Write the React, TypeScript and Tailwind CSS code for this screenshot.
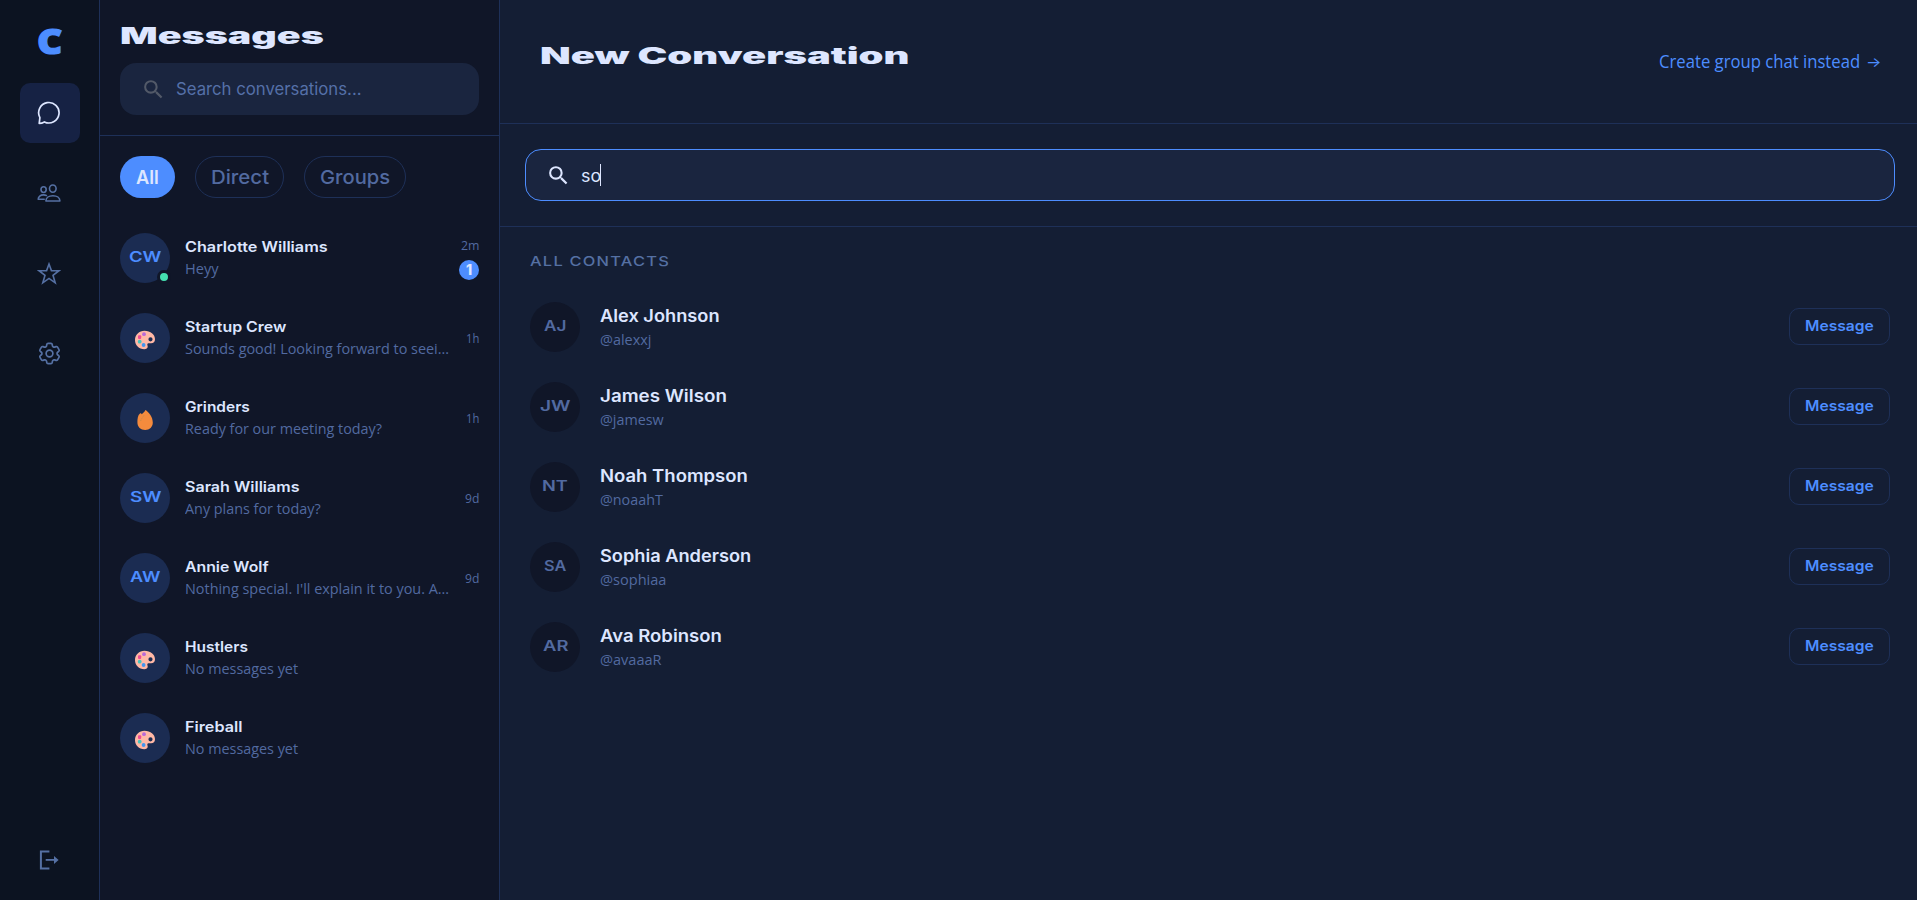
import { useLayoutEffect, useRef, useState } from "react";
import type { ReactNode } from "react";
import { MdSearch } from "react-icons/md";
import { HiOutlineCog6Tooth } from "react-icons/hi2";

/* A run of text stretched horizontally to fill a given width. */
function Wide({ w, children, className = "" }: { w: number; children: ReactNode; className?: string }) {
  const ref = useRef<HTMLSpanElement>(null);
  const [scale, setScale] = useState(1);
  useLayoutEffect(() => {
    if (ref.current) setScale(w / ref.current.offsetWidth);
  }, [w]);
  return (
    <span className={`block text-left whitespace-nowrap ${className}`} style={{ width: w }}>
      <span ref={ref} className="inline-block origin-left" style={{ transform: `scaleX(${scale})` }}>
        {children}
      </span>
    </span>
  );
}

const ChatIcon = () => (
  <svg viewBox="0 0 24 24" className="mr-px size-6" fill="none" stroke="currentColor" strokeWidth="1.7" strokeLinejoin="round">
    <path d="M2.200 22.300 2.900 16.600A10.200 10.200 0 1 1 7.400 20.900Q4.800 22.300 2.200 22.300Z" />
  </svg>
);

const PeopleIcon = () => (
  <svg viewBox="0 0 24 24" className="mr-px size-6" fill="none" stroke="currentColor" strokeWidth="1.6" strokeLinejoin="round" strokeLinecap="round">
    <ellipse cx="15.8" cy="7.6" rx="3.3" ry="3.6" />
    <ellipse cx="6.6" cy="8.6" rx="2.6" ry="2.9" />
    <path d="M8.9 20c0-3.2 3-5.2 7-5.2s7 2 7 5.2Z" />
    <path d="M7.2 18.3H1.2c0-2.7 2.3-4.4 5.4-4.4 1.1 0 2 .2 2.8.5" />
  </svg>
);

const StarIcon = () => (
  <svg viewBox="0 0 24 24" className="mr-px size-6" fill="none" stroke="currentColor" strokeWidth="1.6">
    <path d="M12 3 14.400 9.600 22 9.700 16 14.300 18.200 21.800 12 17.400 5.800 21.800 8 14.300 2 9.700 9.600 9.600Z" />
  </svg>
);

const LogoutIcon = () => (
  <svg viewBox="0 0 20 20" className="mr-px size-5" fill="none" stroke="currentColor" strokeWidth="2">
    <path d="M10.400 1.400H1.900V18.600H10.400" />
    <path d="M6.700 9.900H16.500" strokeWidth="1.800" />
    <path d="M15 5.900 19.600 9.900 15 14Z" fill="currentColor" stroke="none" />
  </svg>
);

const Palette = () => (
  <svg viewBox="0 0 20 20" className="mt-[3px] size-5">
    <path fill="#ffb8a6" fillRule="evenodd" d="M9.5.8C4.200.8 0 4.800 0 10c0 5.200 4 9.200 9.300 9.200 2 0 3.400-.9 3.400-2.500 0-1-.4-1.500-.4-2.200 0-.8.7-1.200 1.800-1.200h2C18.500 13.300 20 11.600 20 9.200 20 4.500 15.500.8 9.500.8Zm6 6.400a2.100 2.100 0 1 1 0 4.200 2.100 2.100 0 0 1 0-4.200Z" />
    <circle cx="9" cy="4.200" r="1.900" fill="#b969d8" />
    <rect x="3" y="5.300" width="3.200" height="3.600" rx="1" fill="#f04a92" />
    <circle cx="4.700" cy="11.700" r="1.900" fill="#45c5bd" />
    <circle cx="8.600" cy="15" r="1.900" fill="#4396ef" />
  </svg>
);

const Flame = () => (
  <svg viewBox="0 0 16 20" className="mt-[3px] h-5 w-4">
    <path fill="#f58b3d" d="M8.400 0C11.500 2 15.800 6.500 15.800 12.600 15.800 17.200 12.600 20 8.200 20 3.700 20 .4 17.200.4 12.300.4 8.700.8 5 3 3.400c.8-.5 1.400 0 1.700.9C5.800 3.500 7.500 2 8.400 0Z" />
    <path fill="none" stroke="#b98a4d" strokeWidth=".8" strokeDasharray="1.200 1.400" d="M6.800 5.500C5.700 7.800 3.700 9 3.500 12" />
  </svg>
);

type Chat = { name: string; nw: number; text: string; tw: number; initials?: string; iw?: number; icon?: ReactNode; time?: string; mw?: number; unread?: boolean };

const chats: Chat[] = [
  { name: "Charlotte Williams", nw: 143, text: "Heyy", tw: 34, initials: "CW", iw: 33, time: "2m", mw: 18, unread: true },
  { name: "Startup Crew", nw: 101, text: "Sounds good! Looking forward to seei...", tw: 264, icon: <Palette />, time: "1h", mw: 13 },
  { name: "Grinders", nw: 65, text: "Ready for our meeting today?", tw: 197, icon: <Flame />, time: "1h", mw: 13 },
  { name: "Sarah Williams", nw: 115, text: "Any plans for today?", tw: 136, initials: "SW", iw: 31, time: "9d", mw: 14 },
  { name: "Annie Wolf", nw: 84, text: "Nothing special. I'll explain it to you. A...", tw: 264, initials: "AW", iw: 31, time: "9d", mw: 14 },
  { name: "Hustlers", nw: 63, text: "No messages yet", tw: 113, icon: <Palette /> },
  { name: "Fireball", nw: 57, text: "No messages yet", tw: 113, icon: <Palette /> },
];

const contacts = [
  { name: "Alex Johnson", nw: 120, handle: "@alexxj", hw: 51, initials: "AJ", iw: 22 },
  { name: "James Wilson", nw: 127, handle: "@jamesw", hw: 64, initials: "JW", iw: 30 },
  { name: "Noah Thompson", nw: 148, handle: "@noaahT", hw: 63, initials: "NT", iw: 26 },
  { name: "Sophia Anderson", nw: 151, handle: "@sophiaa", hw: 66, initials: "SA", iw: 22 },
  { name: "Ava Robinson", nw: 122, handle: "@avaaaR", hw: 62, initials: "AR", iw: 25 },
];

function NavItem({ active, children }: { active?: boolean; children: ReactNode }) {
  return (
    <button className={`flex size-[60px] items-center justify-center rounded-[10px] ${active ? "bg-[#162244] text-[#dde6ff]" : "text-[#5570a3]"}`}>
      {children}
    </button>
  );
}

function ChatRow({ chat }: { chat: Chat }) {
  return (
    <li className="flex h-20 items-center px-5">
      <div className="relative flex size-[50px] shrink-0 items-center justify-center rounded-full bg-[#1b2c52]">
        {chat.initials ? (
          <Wide w={chat.iw ?? 30} className="pb-[2px] text-sm leading-5 font-semibold text-[#4d8dff]">{chat.initials}</Wide>
        ) : (
          chat.icon
        )}
        {chat.unread && <span className="absolute -right-px -bottom-px size-[14px] rounded-full border-3 border-[#101628] bg-[#45e0b0]" />}
      </div>
      <div className="ml-[15px] flex-1">
        <Wide w={chat.nw} className="text-[14.500px] leading-5 font-semibold text-[#dde6ff]">{chat.name}</Wide>
        <Wide w={chat.tw} className="font-['Open_Sans',sans-serif] text-[15px] leading-[22px] text-[#526aa0]">{chat.text}</Wide>
      </div>
      {chat.time && (
        <div className={`flex flex-col items-end gap-[5px] ${chat.unread ? "-mt-px" : ""}`}>
          <Wide w={chat.mw ?? 14} className="font-['Open_Sans',sans-serif] text-[13px] leading-5 text-[#526aa0]">{chat.time}</Wide>
          {chat.unread && (
            <span className="flex size-5 items-center justify-center rounded-full bg-[#4d8dff] text-[14px] leading-none font-extrabold text-[#dde6ff]">1</span>
          )}
        </div>
      )}
    </li>
  );
}

export default function App() {
  return (
    <div className="flex h-[900px] w-full overflow-hidden bg-[#141e34] font-['Inter',sans-serif]">
      <nav className="flex w-[100px] shrink-0 flex-col items-center border-r border-[#1e3058] bg-[#0c1321]">
        <div className="flex h-[83px] items-center">
          <Wide w={25} className="pb-px font-['Open_Sans',sans-serif] text-[36px] leading-none font-extrabold text-[#4d8dff] [-webkit-text-stroke:1.2px_#4d8dff]">C</Wide>
        </div>
        <div className="flex flex-col gap-5">
          <NavItem active><ChatIcon /></NavItem>
          <NavItem><PeopleIcon /></NavItem>
          <NavItem><StarIcon /></NavItem>
          <NavItem><HiOutlineCog6Tooth className="size-[27px]" /></NavItem>
        </div>
        <div className="mt-auto mb-[10px]">
          <NavItem><LogoutIcon /></NavItem>
        </div>
      </nav>

      <aside className="flex w-[400px] shrink-0 flex-col border-r border-[#1e3058] bg-[#101628]">
        <header className="h-[136px] border-b border-[#1e3058] px-5 pt-5">
          <h1 className="text-[22.500px] leading-[31px] font-black text-[#dde6ff]"><Wide w={203}>Messages</Wide></h1>
          <div className="mt-3 flex h-[52px] w-[359px] items-center rounded-2xl bg-[#1a253f] pl-[21px]">
            <MdSearch className="size-[25px] text-[#525968]" />
            <Wide w={186} className="ml-[10px] text-[17px] leading-6 text-[#5570a8]">Search conversations...</Wide>
          </div>
        </header>
        <div className="flex gap-5 px-5 pt-5">
          <button className="flex h-[42px] w-[55px] items-center justify-center rounded-full bg-[#4d8dff] text-[#dde6ff]">
            <Wide w={23} className="pt-[2px] text-[19px] font-semibold">All</Wide>
          </button>
          <button className="flex h-[42px] w-[89px] items-center justify-center rounded-full border border-[#1e3058] text-[#526aa0]">
            <Wide w={58} className="pt-[2px] text-[19px] font-medium">Direct</Wide>
          </button>
          <button className="flex h-[42px] w-[102px] items-center justify-center rounded-full border border-[#1e3058] text-[#526aa0]">
            <Wide w={70} className="pt-[2px] text-[19px] font-medium">Groups</Wide>
          </button>
        </div>
        <ul className="mt-5">
          {chats.map((c) => <ChatRow key={c.name} chat={c} />)}
        </ul>
      </aside>

      <main className="flex flex-1 flex-col">
        <header className="flex h-[124px] items-center justify-between border-b border-[#1e3058] pr-[36px] pl-10">
          <h2 className="pb-[12px] text-[22.500px] leading-[30px] font-black text-[#dde6ff]"><Wide w={369}>New Conversation</Wide></h2>
          <a className="flex items-center gap-[6px] pb-px text-[#4d8dff]">
            <Wide w={201} className="font-['Open_Sans',sans-serif] text-[18px] leading-6">Create group chat instead</Wide>
            <Wide w={15} className="pt-px text-[14px] leading-6">→</Wide>
          </a>
        </header>
        <div className="border-b border-[#1e3058] py-[25px] pr-[22px] pl-[25px]">
          <div className="flex h-[52px] items-center rounded-2xl border border-[#4d8dff] bg-[#1a253f] pl-5 text-[#dde6ff]">
            <MdSearch className="size-[25px]" />
            <Wide w={20} className="ml-[10px] pt-px text-[17px] leading-6">so</Wide>
            <span className="-ml-px h-[22px] w-px bg-[#dde6ff]" />
          </div>
        </div>
        <section className="pr-[27px] pl-[30px]">
          <h3 className="mt-[22px] mb-[13px] text-[13.500px] leading-[25px] font-medium tracking-[1px] text-[#5570a3]"><Wide w={140}>ALL CONTACTS</Wide></h3>
          <ul>
            {contacts.map((c) => (
              <li key={c.name} className="flex h-20 items-center">
                <div className="flex size-[50px] items-center justify-center rounded-full bg-[#101628]">
                  <Wide w={c.iw} className="pb-[2px] text-sm leading-5 font-semibold text-[#526aa0]">{c.initials}</Wide>
                </div>
                <div className="ml-5 flex-1">
                  <Wide w={c.nw} className="text-[17px] leading-6 font-semibold text-[#dde6ff]">{c.name}</Wide>
                  <Wide w={c.hw} className="font-['Open_Sans',sans-serif] text-[15px] leading-[22px] text-[#526aa0]">{c.handle}</Wide>
                </div>
                <button className="mb-px flex h-[37px] w-[101px] items-center justify-center rounded-[10px] border border-[#1e3058] text-[#4d8dff]">
                  <Wide w={69} className="pb-px text-[14.500px] leading-5 font-semibold">Message</Wide>
                </button>
              </li>
            ))}
          </ul>
        </section>
      </main>
    </div>
  );
}
